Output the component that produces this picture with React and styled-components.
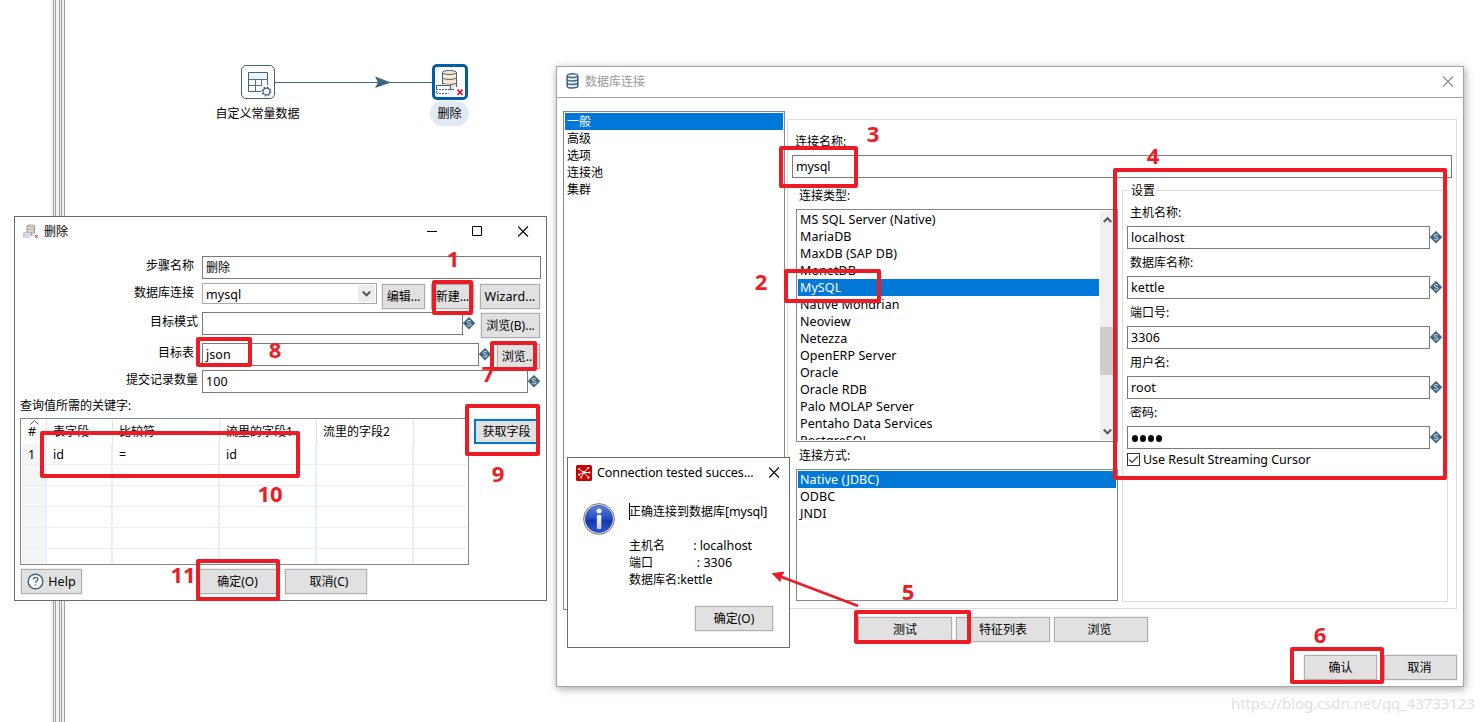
import React from "react";
import styled, { createGlobalStyle, css } from "styled-components";

const RED = "#ed1c24";
const BLUE = "#0078d7";
const STEEL = "#3d6480";

const Global = createGlobalStyle`
  * { box-sizing: border-box; }
  body {
    margin: 0;
    background: #fff;
    color: #000;
    font: 12px/17px "Noto Sans", "Noto Sans CJK SC", sans-serif;
  }
`;

const Desktop = styled.main`
  position: relative;
  width: 1484px;
  height: 722px;
  overflow: hidden;
  background: #fff;
`;

const Latin = styled.span`
  font-size: 12.5px;
  letter-spacing: ${(p) => p.$ls ?? 0.08}px;
  white-space: pre;
`;

/* ---------- canvas ---------- */

const Sash = styled.div`
  position: absolute;
  left: 51px;
  top: 0;
  width: 14px;
  height: 100%;
  background: linear-gradient(
    to right,
    #f0f0f0 0 2px, #a0a0a0 2px 3px, #f0f0f0 3px 4px, #a0a0a0 4px 5px,
    #f0f0f0 5px 8px, #a0a0a0 8px 9px, #f0f0f0 9px 10px, #a0a0a0 10px 11px,
    #f0f0f0 11px 13px, #a0a0a0 13px 14px
  );
`;

const Hop = styled.svg`
  position: absolute;
  left: 274px;
  top: 74px;
`;

const Step = styled.div`
  position: absolute;
  left: ${(p) => p.$x}px;
  top: ${(p) => p.$y}px;
  width: 100px;
  display: flex;
  flex-direction: column;
  align-items: center;
`;

const StepIcon = styled.div`
  width: ${(p) => (p.$selected ? 36 : 34)}px;
  height: ${(p) => (p.$selected ? 36 : 34)}px;
  border: ${(p) => (p.$selected ? "3px solid #005da6" : `1px solid ${STEEL}`)};
  border-radius: 5px;
  background: #fff;
  display: flex;
  align-items: center;
  justify-content: center;
`;

const StepName = styled.div`
  margin: ${(p) => (p.$selected ? 1 : 2)}px 1px 0 0;
  padding: 4px 7px;
  border-radius: 13px;
  background: ${(p) => (p.$selected ? "#e0eaf4" : "transparent")};
`;

/* ---------- windows ---------- */

const Window = styled.section`
  position: absolute;
  left: ${(p) => p.$x}px;
  top: ${(p) => p.$y}px;
  width: ${(p) => p.$w}px;
  height: ${(p) => p.$h}px;
  border: 1px solid ${(p) => (p.$inactive ? "#a5a5a5" : "#6b6b6b")};
  background: #fff;
  display: flex;
  flex-direction: column;
  ${(p) => p.$inactive && css`box-shadow: 1px 2px 8px rgba(0, 0, 0, 0.35);`}
`;

const TitleBar = styled.header`
  flex: none;
  height: ${(p) => p.$h}px;
  padding: 0 ${(p) => p.$right}px ${(p) => (p.$inactive ? 2 : 0)}px ${(p) => p.$left}px;
  display: flex;
  align-items: center;
  color: ${(p) => (p.$inactive ? "#999" : "#000")};
  border-bottom: ${(p) => (p.$inactive ? "1px solid #a5a5a5" : "none")};
`;

const Title = styled.div`
  flex: 1;
  margin-left: ${(p) => p.$gap}px;
  white-space: nowrap;
`;

const WindowKeys = styled.div`
  display: flex;
  gap: 35px;
`;

const Button = styled.button`
  flex: none;
  width: ${(p) => p.$w}px;
  height: 25px;
  margin: ${(p) => p.$mt || 0}px 0 0 ${(p) => p.$ml || 0}px;
  padding: 0 ${(p) => p.$pr || 0}px 0 ${(p) => p.$pl || 0}px;
  display: flex;
  align-items: center;
  justify-content: center;
  gap: 4px;
  border: ${(p) => (p.$focus ? `2px solid ${BLUE}` : "1px solid #adadad")};
  background: #e1e1e1;
  box-shadow: 0 0 0 1px #f0f0f0;
  font: inherit;
  color: #000;
  white-space: nowrap;
`;

const Field = styled.div`
  flex: none;
  width: ${(p) => p.$w}px;
  height: ${(p) => (p.$combo ? 21 : 23)}px;
  padding: ${(p) => (p.$combo ? "2px 1px 0 3px" : "2px 3px 0")};
  border: 1px solid ${(p) => (p.$combo ? "#a9a9a9" : "#7a7a7a")};
  background: #fff;
  display: flex;
  align-items: flex-start;
  justify-content: space-between;
`;

const ComboArrow = styled.span`
  width: 17px;
  height: 17px;
  margin-top: -1px;
  background: #ededed;
  display: flex;
  align-items: center;
  justify-content: center;
`;

const FormRow = styled.div`
  flex: none;
  display: flex;
  align-items: flex-start;
  height: ${(p) => p.$h}px;
`;

const FormLabel = styled.label`
  flex: none;
  width: 187px;
  padding: 1px ${(p) => p.$pr}px 0 0;
  text-align: right;
`;

const VarMark = styled.svg`
  flex: none;
  margin-top: 5px;
`;

const KeysLabel = styled.div`
  height: 21px;
  padding-left: 5px;
`;

const KeysRow = styled.div`
  display: flex;
  padding-left: 5px;
  height: 151px;
`;

const KeyTable = styled.div`
  width: 449px;
  height: 147px;
  padding: 1px;
  border: 1px solid #828790;
  display: flex;
  flex-direction: column;
  overflow: hidden;
`;

const TableLine = styled.div`
  flex: none;
  display: grid;
  grid-template-columns: 25px 66px 107px 97px 97px 1fr;
  height: ${(p) => (p.$head ? 24 : 21)}px;
`;

const HeadCell = styled.div`
  position: relative;
  padding: 3px 0 0 6px;
  border-right: 1px solid #e2e2e2;
  white-space: nowrap;
  &:last-child { border-right: none; }
`;

const SortMark = styled.svg`
  position: absolute;
  left: 8px;
  top: 0;
`;

const Cell = styled.div`
  padding: 2px 0 0 6px;
  border-right: 2px solid #e9eff8;
  border-bottom: 1px solid #ededed;
  &:first-child { background: #f5f5f5; }
  &:last-child { border-right: none; }
`;

const DialogKeys = styled.div`
  display: flex;
  padding-left: 6px;
`;

/* ---------- connection window ---------- */

const ConnBody = styled.div`
  display: flex;
  padding: 13px 0 0 6px;
  height: 511px;
`;

const ListBox = styled.div`
  flex: none;
  width: ${(p) => p.$w}px;
  height: ${(p) => p.$h}px;
  padding: 1px;
  border: 1px solid #828790;
  background: #fff;
  display: flex;
  overflow: hidden;
`;

const Items = styled.div`
  flex: 1;
  overflow: hidden;
`;

const Item = styled.div`
  height: 17px;
  padding-left: 2px;
  white-space: nowrap;
  ${(p) => p.$on && css`background: ${BLUE}; color: #fff;`}
`;

const ScrollBar = styled.div`
  width: 17px;
  margin: 0 -1px 0 1px;
  padding-right: 2px;
  background: #f0f0f0;
  display: flex;
  flex-direction: column;
  align-items: center;
`;

const Thumb = styled.div`
  width: 17px;
  height: 48px;
  margin: 99px -2px auto 0;
  background: #cdcdcd;
`;

const Panel = styled.div`
  width: 670px;
  height: 490px;
  margin: 8px 0 0 2px;
  padding: 13px 0 0 4px;
  border: 1px solid #dcdcdc;
`;

const Caption = styled.div`
  height: ${(p) => p.$h}px;
  padding: ${(p) => p.$pt || 0}px 0 0 3px;
`;

const PanelColumns = styled.div`
  display: flex;
  padding-left: 4px;
`;

const TypeColumn = styled.div`
  width: 326px;
  padding-top: 9px;
`;

const Settings = styled.fieldset`
  width: 326px;
  height: 420px;
  margin: 4px 0 0;
  padding: 5px 0 0 4px;
  border: 1px solid #dcdcdc;
  min-width: 0;
`;

const Legend = styled.legend`
  margin-left: 2px;
  padding: 0 2px;
  height: 17px;
`;

const FieldRow = styled.div`
  display: flex;
  height: 28px;
`;

const SettingLabel = styled.div`
  height: 22px;
  padding-left: 3px;
`;

const CheckRow = styled.div`
  display: flex;
  align-items: center;
  gap: 3px;
  margin-top: -3px;
`;

const CheckBox = styled.span`
  width: 13px;
  height: 13px;
  border: 1px solid #333;
  display: flex;
`;

const Dots = styled.span`
  display: flex;
  gap: 2px;
  padding: 6px 0 0 1px;
  i {
    width: 6px;
    height: 7px;
    border-radius: 50%;
    background: #000;
  }
`;

const ActionRow = styled.div`
  display: flex;
  gap: ${(p) => p.$gap}px;
  padding: ${(p) => p.$pt}px 0 0 ${(p) => p.$pl}px;
`;

/* ---------- message box ---------- */

const Message = styled.div`
  display: flex;
  padding: 16px 0 0 15px;
`;

const MessageText = styled.div`
  margin: 0 0 0 13px;
  height: 103px;
  white-space: pre;
`;

const Caret = styled.span`
  display: inline-block;
  width: 1px;
  height: 17px;
  margin-right: -1px;
  vertical-align: top;
  background: #000;
`;

/* ---------- annotations ---------- */

const Mark = styled.div`
  position: absolute;
  left: ${(p) => p.$x}px;
  top: ${(p) => p.$y}px;
  width: ${(p) => p.$w}px;
  height: ${(p) => p.$h}px;
  border: 4px solid ${RED};
  border-radius: 2px;
`;

const Num = styled.div`
  position: absolute;
  left: ${(p) => p.$x - 20}px;
  top: ${(p) => p.$y - 16}px;
  width: 40px;
  text-align: center;
  color: ${RED};
  font: bold 22px/30px "Noto Sans", sans-serif;
`;

const Pointer = styled.svg`
  position: absolute;
  left: 765px;
  top: 565px;
`;

const Watermark = styled.div`
  position: absolute;
  left: 1231px;
  top: 691px;
  font: 15px/24px "Noto Sans", sans-serif;
  color: #e0e0e0;
  letter-spacing: -0.08px;
  white-space: nowrap;
`;

/* ---------- drawings ---------- */

const DeleteIcon = ({ size = 30 }) => (
  <svg width={size} height={size} viewBox="0 0 30 30" fill="none">
    <g stroke={STEEL} strokeWidth="1">
      <path d="M7.5 5.5v15c0 3 14 3 14 0v-15" fill="#fbe8cb" />
      <ellipse cx="14.5" cy="5.5" rx="7" ry="2" fill="#fbe8cb" />
      <path d="M7.5 10.5c0 2.6 14 2.6 14 0M7.5 15.5c0 2.6 14 2.6 14 0" />
    </g>
    <path d="M1 17.5h14v10H1z" fill="#fff" />
    <path d="M1.5 22.5v-4h14v4h-14M1.5 22.5v4h12" stroke={STEEL} />
    <path d="M3 22.5h11M3 26.5h11M1.5 23v4" stroke="#fff" strokeDasharray="1 2" />
    <path d="M19 20h9v9h-9z" fill="#fff" />
    <path d="M22.5 22.5l5 5.5M27.5 22.5l-5 5.5" stroke="#e4032e" strokeWidth="1.7" />
  </svg>
);

const GridIcon = () => (
  <svg width="30" height="30" viewBox="0 0 30 30" fill="none" stroke={STEEL}>
    <path d="M6 6h18v6H6z" fill="#eaf4fb" stroke="none" />
    <path d="M18 24.5H5.5v-19h19V18" />
    <path d="M6 12.5h18M6 18.5h13M12.5 12v12M18.5 12v7" strokeWidth=".9" />
    <circle cx="23.5" cy="24.5" r="3.4" fill="#fff" strokeWidth="1.1" />
    <circle cx="23.5" cy="24.5" r="4.3" strokeWidth="1.4" strokeDasharray="1.4 1.98" />
  </svg>
);

const Variable = () => (
  <VarMark width="13" height="13" viewBox="0 0 13 13">
    <path d="M6 .2l6 6-6 6-6-6z" fill={STEEL} stroke={STEEL} strokeWidth=".5" />
    <path d="M7.9 4.4C7.3 3.2 4.3 3.1 4.3 4.8c0 1.8 3.8.9 3.8 2.8 0 1.7-3.3 1.6-4 .3" fill="none" stroke="#e2eaf0" strokeWidth="1" />
  </VarMark>
);

const Chevron = ({ up }) => (
  <svg width="9" height="17" viewBox="0 0 9 17" fill="none" stroke="#505050" strokeWidth="1.9">
    <path d={up ? "M.8 11l3.7-3.8L8.2 11" : "M.8 6.5l3.7 3.8 3.7-3.8"} />
  </svg>
);

const Cross = ({ color = "#000" }) => (
  <svg width="11" height="11" viewBox="0 0 11 11" stroke={color} strokeWidth="1.1">
    <path d="M0 .5l10 10M10 .5l-10 10" />
  </svg>
);

const DatabaseIcon = () => (
  <svg width="14" height="16" viewBox="0 0 14 16" fill="#e6f0f6" stroke={STEEL} strokeWidth="1.5">
    <path d="M1.2 2.8v10.4c0 2.4 10.6 2.4 10.6 0V2.8" />
    <ellipse cx="6.5" cy="2.7" rx="5.3" ry="1.9" />
    <path d="M1.2 6.2c0 2.3 10.6 2.3 10.6 0M1.2 9.7c0 2.3 10.6 2.3 10.6 0" fill="none" />
  </svg>
);

const KettleIcon = () => (
  <svg width="16" height="16" viewBox="0 0 16 16">
    <rect width="16" height="16" rx="1.5" fill="#cc0000" />
    <path d="M3 4l5 3.5L12 3M8 7.5h6M8 7.5L3 9.5M8 7.5l-3 5M8 7.5l4.5 5" stroke="#fff" fill="none" strokeWidth="1" />
    <g fill="#fff">
      <circle cx="3" cy="4" r="1" /><circle cx="12.3" cy="3" r="1" /><circle cx="13.5" cy="7.5" r=".9" />
      <circle cx="3" cy="9.7" r="1" /><circle cx="5" cy="12.6" r="1" /><circle cx="12.5" cy="12.6" r="1.1" /><circle cx="8" cy="7.5" r="1.4" />
    </g>
  </svg>
);

const InfoIcon = () => (
  <svg width="33" height="33" viewBox="0 0 33 33">
    <defs>
      <linearGradient id="ball" x1="0" y1="0" x2="0" y2="1">
        <stop offset="0" stopColor="#5a83dc" />
        <stop offset=".5" stopColor="#2149c4" />
        <stop offset=".55" stopColor="#1433ae" />
        <stop offset="1" stopColor="#2a5bd6" />
      </linearGradient>
      <linearGradient id="stem" x1="0" y1="0" x2="0" y2="1">
        <stop offset="0" stopColor="#fff" />
        <stop offset="1" stopColor="#c9cdd6" />
      </linearGradient>
    </defs>
    <circle cx="16" cy="16" r="15.4" fill="#e8e8e8" stroke="#777" strokeWidth="1" />
    <circle cx="16" cy="16" r="13.6" fill="url(#ball)" stroke="#1a2f80" strokeWidth=".6" />
    <circle cx="16" cy="8" r="2.5" fill="#fff" />
    <rect x="13.8" y="11.9" width="4.5" height="14" rx="1" fill="url(#stem)" />
  </svg>
);

const HelpIcon = () => (
  <svg width="17" height="17" viewBox="0 0 17 17" fill="none" stroke={STEEL}>
    <circle cx="8.5" cy="8.5" r="7.3" strokeWidth="1.5" fill="#fff" />
    <path d="M6.3 6.6c0-3 4.5-2.8 4.5-.2 0 1.6-2.2 1.6-2.2 3.4" strokeWidth="1.4" />
    <circle cx="8.6" cy="12" r=".5" fill={STEEL} strokeWidth=".6" />
  </svg>
);

/* ---------- data ---------- */

const types = [
  "MS SQL Server (Native)", "MariaDB", "MaxDB (SAP DB)", "MonetDB", "MySQL",
  "Native Mondrian", "Neoview", "Netezza", "OpenERP Server", "Oracle",
  "Oracle RDB", "Palo MOLAP Server", "Pentaho Data Services", "PostgreSQL",
];

const settings = [
  ["主机名称:", "localhost"],
  ["数据库名称:", "kettle"],
  ["端口号:", "3306"],
  ["用户名:", "root"],
  ["密码:", null],
];

const marks = [
  [432, 280, 41, 35], [196, 337, 56, 30], [490, 341, 47, 30], [465, 404, 75, 52],
  [40, 431, 260, 47], [196, 559, 84, 42], [779, 146, 79, 42], [784, 269, 97, 34],
  [1113, 168, 334, 312], [854, 610, 117, 34], [1290, 647, 94, 37],
];

const numbers = [
  [453, 259], [761, 282], [873, 134], [1153, 156], [908, 592], [1320, 635],
  [488, 374], [275, 350], [498, 474], [270, 494], [183, 575],
];

/* ---------- parts ---------- */

function ConnectionWindow() {
  return (
    <Window $x={556} $y={66} $w={908} $h={621} $inactive>
      <TitleBar $h={31} $left={9} $right={9} $inactive>
        <DatabaseIcon />
        <Title $gap={5}>数据库连接</Title>
        <Cross color="#888" />
      </TitleBar>
      <ConnBody>
        <ListBox $w={222} $h={499}>
          <Items>
            {["一般", "高级", "选项", "连接池", "集群"].map((t, i) => (
              <Item key={t} $on={i === 0}>{t}</Item>
            ))}
          </Items>
        </ListBox>
        <Panel>
          <Caption $h={22}>连接名称:</Caption>
          <Field $w={660}><Latin $ls={-0.1}>mysql</Latin></Field>
          <PanelColumns>
            <TypeColumn>
              <Caption $h={22}>连接类型:</Caption>
              <ListBox $w={322} $h={233}>
                <Items>
                  {types.map((t) => (
                    <Item key={t} $on={t === "MySQL"}><Latin>{t}</Latin></Item>
                  ))}
                </Items>
                <ScrollBar>
                  <Chevron up />
                  <Thumb />
                  <Chevron />
                </ScrollBar>
              </ListBox>
              <Caption $h={27} $pt={5}>连接方式:</Caption>
              <ListBox $w={322} $h={132}>
                <Items>
                  <Item $on><Latin>Native (JDBC)</Latin></Item>
                  <Item><Latin>ODBC</Latin></Item>
                  <Item><Latin>JNDI</Latin></Item>
                </Items>
              </ListBox>
            </TypeColumn>
            <Settings>
              <Legend>设置</Legend>
              {settings.map(([label, value]) => (
                <React.Fragment key={label}>
                  <SettingLabel>{label}</SettingLabel>
                  <FieldRow>
                    <Field $w={303}>
                      {value ? <Latin>{value}</Latin> : <Dots><i /><i /><i /><i /></Dots>}
                    </Field>
                    <Variable />
                  </FieldRow>
                </React.Fragment>
              ))}
              <CheckRow>
                <CheckBox>
                  <svg width="11" height="11" viewBox="0 0 11 11" fill="none" stroke="#333" strokeWidth="1.2">
                    <path d="M1.3 5.5l2.7 2.8 5.8-6" />
                  </svg>
                </CheckBox>
                <Latin $ls={-0.03}>Use Result Streaming Cursor</Latin>
              </CheckRow>
            </Settings>
          </PanelColumns>
        </Panel>
      </ConnBody>
      <ActionRow $gap={4} $pt={8} $pl={301}>
        <Button $w={94}>测试</Button>
        <Button $w={94}>特征列表</Button>
        <Button $w={94} $pr={3}>浏览</Button>
      </ActionRow>
      <ActionRow $gap={7} $pt={13} $pl={747}>
        <Button $w={73}>确认</Button>
        <Button $w={73} $pr={2}>取消</Button>
      </ActionRow>
    </Window>
  );
}

function DeleteWindow() {
  return (
    <Window $x={14} $y={216} $w={533} $h={385}>
      <TitleBar $h={28} $left={8} $right={17}>
        <DeleteIcon size={16} />
        <Title $gap={5}>删除</Title>
        <WindowKeys>
          <svg width="11" height="11"><path d="M1 5.5h10" stroke="#000" /></svg>
          <svg width="11" height="11"><path d="M.5.5h9v9h-9z" fill="none" stroke="#000" /></svg>
          <Cross />
        </WindowKeys>
      </TitleBar>
      <FormRow $h={11} />
      <FormRow $h={27}>
        <FormLabel $pr={8}>步骤名称</FormLabel>
        <Field $w={339}>删除</Field>
      </FormRow>
      <FormRow $h={29}>
        <FormLabel $pr={8}>数据库连接</FormLabel>
        <Field $w={175} $combo>
          <Latin>mysql</Latin>
          <ComboArrow><Chevron /></ComboArrow>
        </Field>
        <Button $w={43} $ml={5} $mt={1}>编辑...</Button>
        <Button $w={43} $ml={6} $mt={1}>新建...</Button>
        <Button $w={60} $ml={6} $mt={1}><Latin>Wizard...</Latin></Button>
      </FormRow>
      <FormRow $h={31}>
        <FormLabel $pr={4}>目标模式</FormLabel>
        <Field $w={261} />
        <Variable />
        <Button $w={59} $ml={5} $mt={1}>浏览(B)...</Button>
      </FormRow>
      <FormRow $h={27}>
        <FormLabel $pr={8}>目标表</FormLabel>
        <Field $w={277}><Latin>json</Latin></Field>
        <Variable />
        <Button $w={43} $ml={5} $mt={1}>浏览...</Button>
      </FormRow>
      <FormRow $h={27}>
        <FormLabel $pr={4}>提交记录数量</FormLabel>
        <Field $w={326}><Latin>100</Latin></Field>
        <Variable />
      </FormRow>
      <KeysLabel>查询值所需的关键字:</KeysLabel>
      <KeysRow>
        <KeyTable>
          <TableLine $head>
            <HeadCell><SortMark width="9" height="5" fill="none" stroke="#555"><path d="M.5 4.5l4-4 4 4" /></SortMark><Latin>#</Latin></HeadCell>
            <HeadCell>表字段</HeadCell>
            <HeadCell>比较符</HeadCell>
            <HeadCell>流里的字段1</HeadCell>
            <HeadCell>流里的字段2</HeadCell>
            <HeadCell />
          </TableLine>
          {[["1", "id", "=", "id", "", ""], [], [], [], [], []].map((row, r) => (
            <TableLine key={r}>
              {[0, 1, 2, 3, 4, 5].map((c) => (
                <Cell key={c}><Latin>{row[c]}</Latin></Cell>
              ))}
            </TableLine>
          ))}
        </KeyTable>
        <Button $w={65} $ml={5} $mt={1} $focus>获取字段</Button>
      </KeysRow>
      <DialogKeys>
        <Button $w={61}><HelpIcon /><Latin>Help</Latin></Button>
        <Button $w={79} $ml={117} $pr={2}>确定(O)</Button>
        <Button $w={82} $ml={7} $pl={6}>取消(C)</Button>
      </DialogKeys>
    </Window>
  );
}

function MessageWindow() {
  return (
    <Window $x={567} $y={457} $w={223} $h={191}>
      <TitleBar $h={29} $left={8} $right={9}>
        <KettleIcon />
        <Title $gap={5}><Latin $ls={-0.1}>Connection tested succes...</Latin></Title>
        <Cross />
      </TitleBar>
      <Message>
        <InfoIcon />
        <MessageText>
          <div><Caret />正确连接到数据库<Latin $ls={-0.15}>[mysql]</Latin></div>
          <div>{" "}</div>
          <div>主机名{"        "}<Latin $ls={-0.05}> : localhost</Latin></div>
          <div>端口{"             "}<Latin $ls={0}> : 3306</Latin></div>
          <div>数据库名<Latin $ls={-0.15}>:kettle</Latin></div>
        </MessageText>
      </Message>
      <Button $w={78} $ml={127}>确定(O)</Button>
    </Window>
  );
}

export default function App() {
  return (
    <Desktop>
      <Global />
      <Sash />
      <Hop width="160" height="16" viewBox="0 0 160 16">
        <path d="M0 8.5h160" stroke={STEEL} />
        <path d="M101 2.5l16 6-16 5.5 3-5.5z" fill={STEEL} />
      </Hop>
      <Step $x={208} $y={65}>
        <StepIcon><GridIcon /></StepIcon>
        <StepName>自定义常量数据</StepName>
      </Step>
      <Step $x={400} $y={64}>
        <StepIcon $selected><DeleteIcon /></StepIcon>
        <StepName $selected>删除</StepName>
      </Step>
      <ConnectionWindow />
      <DeleteWindow />
      <MessageWindow />
      {marks.map(([x, y, w, h], i) => (
        <Mark key={i} $x={x} $y={y} $w={w} $h={h} />
      ))}
      {numbers.map(([x, y], i) => (
        <Num key={i} $x={x} $y={y}>{i + 1}</Num>
      ))}
      <Pointer width="100" height="50" viewBox="765 565 100 50">
        <path d="M857 605.5L779 576" stroke={RED} strokeWidth="2.6" strokeLinecap="round" />
        <path d="M771.5 573.2l13-1.6-3 5.2-1 5.4z" fill={RED} />
      </Pointer>
      <Watermark>https://blog.csdn.net/qq_43733123</Watermark>
    </Desktop>
  );
}
